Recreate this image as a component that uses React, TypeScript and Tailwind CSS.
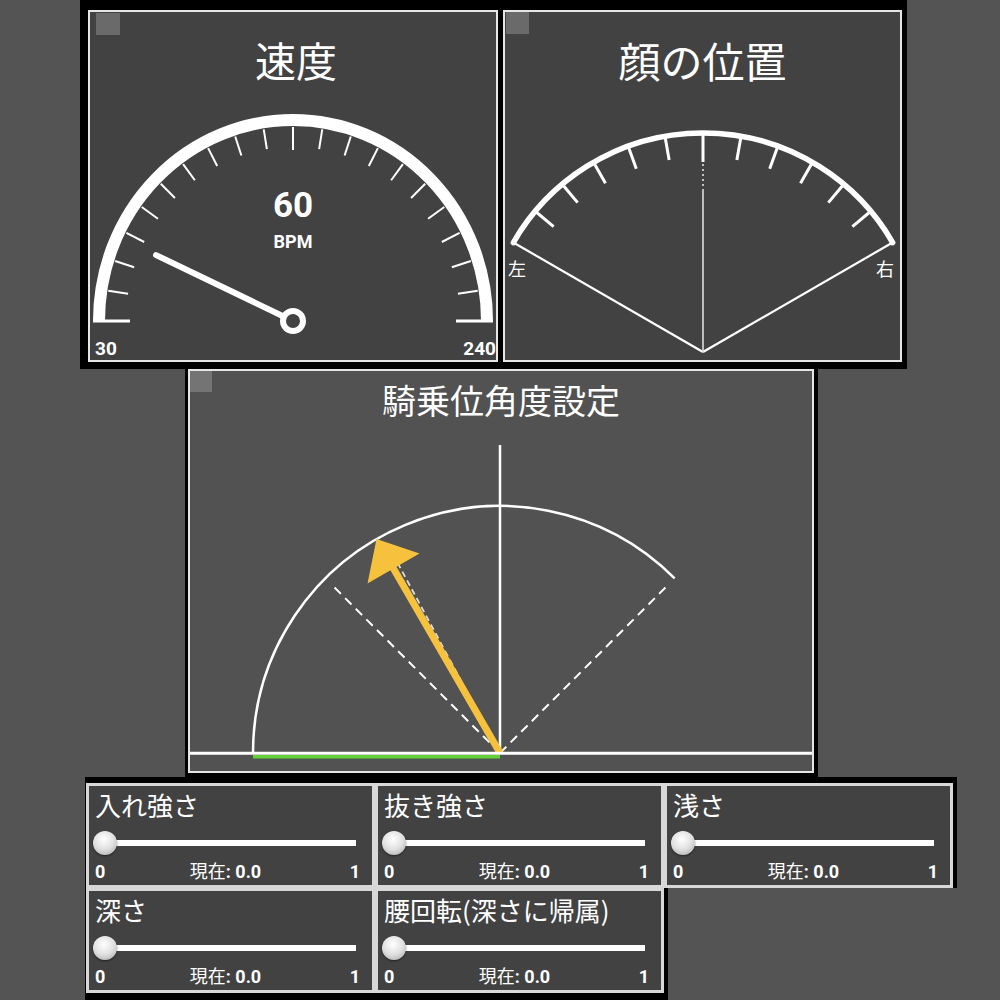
import React from 'react';

const CJK = "font-['Noto_Sans_CJK_JP',sans-serif]";
const NUM = "font-['Roboto','Noto_Sans_CJK_JP',sans-serif]";
const SVG_FONT = "Roboto, 'Noto Sans CJK JP', sans-serif";

const pt = (cx: number, cy: number, r: number, deg: number) => {
	const a = (deg * Math.PI) / 180;
	return [cx + r * Math.cos(a), cy - r * Math.sin(a)];
};

// point on an ellipse, inset by k from the stroke centre
const ept = (cx: number, cy: number, rx: number, ry: number, k: number, deg: number) => {
	const a = (deg * Math.PI) / 180;
	return [cx + (rx - k) * Math.cos(a), cy - (ry - k) * Math.sin(a)];
};

const SpeedPanel: React.FC = () => {
	const cx = 203;
	const cy = 309;
	const rx = 194;
	const ry = 201;
	const ticks: number[] = [];
	for (let d = 9; d < 180; d += 9) ticks.push(d);
	const [nx, ny] = pt(cx, cy, 152, 180 - 25.7);
	return (
		<div className="relative w-[410px] h-[352px] border-2 border-[#e6e6e6] bg-[#424242] flex flex-col items-center">
			<div className="absolute left-[6px] top-[1px] w-[24px] h-[22px] bg-[#6a6a6a]" />
			<svg width={406} height={348} className="absolute left-0 top-0">
				<path d={`M ${cx - rx} ${cy} A ${rx} ${ry} 0 0 1 ${cx + rx} ${cy}`} fill="none" stroke="#fff" strokeWidth={12} />
				{ticks.map((d) => {
					const [x1, y1] = ept(cx, cy, rx, ry, 7, d);
					const [x2, y2] = ept(cx, cy, rx, ry, d === 90 ? 30 : 27, d);
					return <line key={d} x1={x1} y1={y1} x2={x2} y2={y2} stroke="#fff" strokeWidth={2} />;
				})}
				<line x1={cx - rx - 6} y1={cy} x2={cx - rx + 31} y2={cy} stroke="#fff" strokeWidth={3} />
				<line x1={cx + rx - 31} y1={cy} x2={cx + rx + 6} y2={cy} stroke="#fff" strokeWidth={3} />
				<line x1={cx} y1={cy} x2={nx} y2={ny} stroke="#fff" strokeWidth={6} strokeLinecap="round" />
				<circle cx={cx} cy={cy} r={10} fill="#424242" stroke="#fff" strokeWidth={6} />
				<text x={cx} y={205} textAnchor="middle" fill="#fff" fontFamily={SVG_FONT} fontWeight="bold" fontSize={35}>60</text>
				<text x={cx} y={236} textAnchor="middle" fill="#fff" fontFamily={SVG_FONT} fontWeight="bold" fontSize={18}>BPM</text>
				<text x={5} y={343} fill="#fff" fontFamily={SVG_FONT} fontWeight="bold" fontSize={19}>30</text>
				<text x={406} y={343} textAnchor="end" fill="#fff" fontFamily={SVG_FONT} fontWeight="bold" fontSize={19}>240</text>
			</svg>
			<div className={`${CJK} relative pt-[27px] pl-[6px] text-[41px] leading-none text-white`}>速度</div>
		</div>
	);
};

const FacePanel: React.FC = () => {
	const cx = 198;
	const cy = 340;
	const r = 219;
	const [lx, ly] = pt(cx, cy, r, 150);
	const [rx, ry] = pt(cx, cy, r, 30);
	const ticks: number[] = [];
	for (let d = 40; d <= 140; d += 10) ticks.push(d);
	return (
		<div className="relative w-[399px] h-[352px] border-2 border-[#e6e6e6] bg-[#424242] flex flex-col items-center">
			<div className="absolute left-[1px] top-[0px] w-[23px] h-[22px] bg-[#6a6a6a]" />
			<svg width={395} height={348} className="absolute left-0 top-0">
				<line x1={lx} y1={ly} x2={cx} y2={cy} stroke="#fff" strokeWidth={2.2} />
				<line x1={rx} y1={ry} x2={cx} y2={cy} stroke="#fff" strokeWidth={2.2} />
				<path d={`M ${lx} ${ly} A ${r} ${r} 0 0 1 ${rx} ${ry}`} fill="none" stroke="#fff" strokeWidth={5.5} strokeLinecap="round" />
				{ticks.map((d) => {
					const [x1, y1] = pt(cx, cy, 217, d);
					const [x2, y2] = pt(cx, cy, d === 90 ? 190 : 195, d);
					return <line key={d} x1={x1} y1={y1} x2={x2} y2={y2} stroke="#fff" strokeWidth={3} />;
				})}
				<line x1={cx} y1={152} x2={cx} y2={175} stroke="#eee" strokeWidth={1.5} strokeDasharray="2 3" />
				<line x1={cx} y1={177} x2={cx} y2={cy} stroke="#ddd" strokeWidth={1.6} />
				<text x={3} y={264} fill="#fff" fontFamily={SVG_FONT} fontSize={18}>左</text>
				<text x={389} y={264} textAnchor="end" fill="#fff" fontFamily={SVG_FONT} fontSize={18}>右</text>
			</svg>
			<div className={`${CJK} relative pt-[27px] text-[42px] leading-none text-white`}>顔の位置</div>
		</div>
	);
};

const AnglePanel: React.FC = () => {
	const cx = 310;
	const cy = 382;
	const r = 247;
	const [ex, ey] = pt(cx, cy, r, 45);
	const [dlx, dly] = pt(cx, cy, 238, 135);
	const [drx, dry] = pt(cx, cy, 238, 45);
	const [dax, day] = pt(cx, cy, 238, 118.3);
	const [tx, ty] = pt(cx, cy, 247, 120);
	const [sx, sy] = pt(cx, cy, 216, 120);
	const [bx, by] = pt(cx, cy, 213, 120);
	const [c1x, c1y] = [bx + 26, by - 15];
	const [c2x, c2y] = [bx - 26, by + 15];
	return (
		<div className="relative w-[626px] h-[404px] border-2 border-[#e6e6e6] bg-[#525252] flex flex-col items-center">
			<div className="absolute left-0 top-0 w-[22px] h-[21px] bg-[#747474]" />
			<svg width={622} height={400} className="absolute left-0 top-0">
				<line x1={cx} y1={74} x2={cx} y2={cy} stroke="#fff" strokeWidth={2.5} />
				<path d={`M ${cx - r} ${cy} A ${r} ${r} 0 0 1 ${ex} ${ey}`} fill="none" stroke="#fff" strokeWidth={2.5} />
				<line x1={cx} y1={cy} x2={dlx} y2={dly} stroke="#fff" strokeWidth={2} strokeDasharray="9 6" />
				<line x1={cx} y1={cy} x2={drx} y2={dry} stroke="#fff" strokeWidth={2} strokeDasharray="9 6" />
				<line x1={cx} y1={cy} x2={dax} y2={day} stroke="#ddd" strokeWidth={1.8} strokeDasharray="6 4" />
				<line x1={cx} y1={cy} x2={sx} y2={sy} stroke="#f6c23e" strokeWidth={7} />
				<polygon points={`${tx},${ty} ${c1x},${c1y} ${c2x},${c2y}`} fill="#f6c23e" />
				<line x1={0} y1={382.3} x2={622} y2={382.3} stroke="#fff" strokeWidth={3} />
				<line x1={cx - r} y1={385.8} x2={cx} y2={385.8} stroke="#62d13a" strokeWidth={3.5} />
			</svg>
			<div className={`${CJK} relative pt-[12px] text-[34px] leading-none text-white`}>騎乗位角度設定</div>
		</div>
	);
};

const SliderPanel: React.FC<{ label: string }> = ({ label }) => (
	<div className="w-[287px] h-[103px] border-2 border-[#d8d8d8] ring-1 ring-[#d8d8d8] bg-[#424242] flex flex-col">
		<div className={`${CJK} pl-[6px] pt-[6px] text-[26px] leading-none text-white whitespace-nowrap`}>{label}</div>
		<div className="relative mt-[13px] h-[24px] flex items-center">
			<div className="ml-[16px] w-[251px] h-[6px] bg-white" />
			<div className="absolute left-[4px] top-[0px] w-[24px] h-[24px] rounded-full bg-[radial-gradient(circle_at_45%_35%,#ffffff,#e0e0e0_50%,#a0a0a0)] shadow-[0_1px_2px_rgba(0,0,0,0.5)]" />
		</div>
		<div className={`${NUM} mt-[8px] flex justify-between pl-[6px] pr-[12px] text-[18px] leading-none text-white`}>
			<span className="font-bold">0</span>
			<span className="-ml-[4px]">
				<span>現在</span>
				<span className="font-bold">: 0.0</span>
			</span>
			<span className="font-bold">1</span>
		</div>
	</div>
);

export default function App() {
	return (
		<div className="w-[1000px] h-[1000px] bg-[#545454] overflow-hidden flex flex-col">
			{/* gauges */}
			<div className="ml-[80px] w-[827px] h-[369px] bg-black flex gap-[5px] pl-[8px] pt-[10px]">
				<SpeedPanel />
				<FacePanel />
			</div>

			{/* angle setting */}
			<div className="ml-[185px] w-[633px] h-[408px] bg-black pl-[3px]">
				<AnglePanel />
			</div>

			{/* sliders */}
			<div className="ml-[85px] w-[872px] h-[111px] bg-black pl-[2px] pt-[7px] flex gap-[2px]">
				<SliderPanel label="入れ強さ" />
				<SliderPanel label="抜き強さ" />
				<SliderPanel label="浅さ" />
			</div>
			<div className="ml-[85px] w-[583px] h-[112px] bg-black pl-[2px] pt-[1px] flex gap-[2px]">
				<SliderPanel label="深さ" />
				<SliderPanel label="腰回転(深さに帰属)" />
			</div>
		</div>
	);
}
